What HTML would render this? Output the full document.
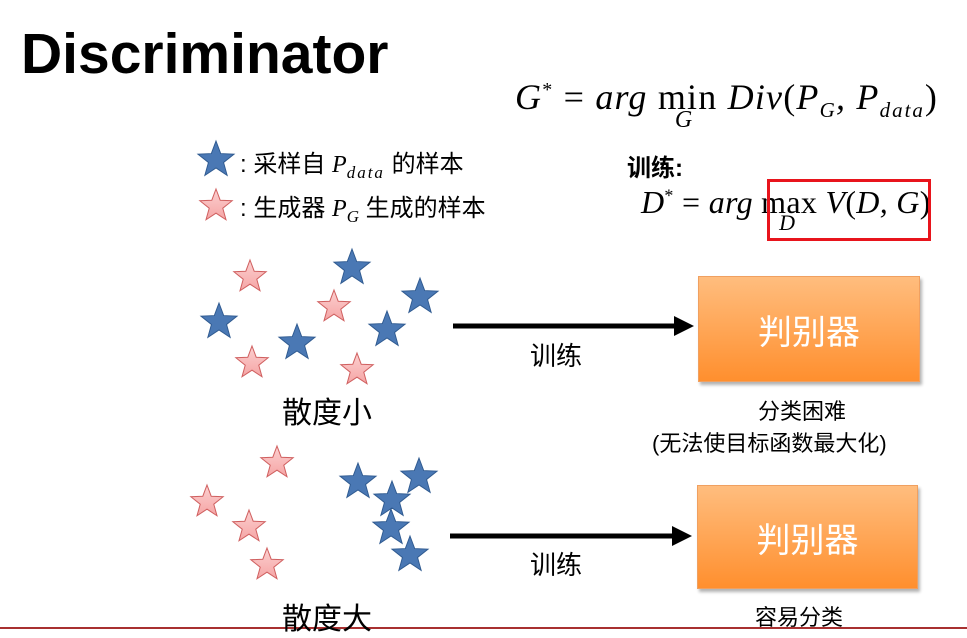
<!DOCTYPE html>
<html><head><meta charset="utf-8"><style>
body{margin:0;width:967px;height:630px;background:#fff;position:relative;overflow:hidden;font-family:"Liberation Sans","Noto Sans CJK SC",sans-serif;color:#000}
.a{position:absolute;white-space:nowrap}
.m{font-family:"Liberation Serif","DejaVu Serif",serif;font-style:italic}
.box{position:absolute;background:linear-gradient(#ffbd7e,#ff8f2e);border:1px solid #f0a060;box-shadow:2px 3px 3px rgba(0,0,0,.3);color:#fff;font-size:34px;display:flex;align-items:center;justify-content:center}
</style></head><body>
<div class="a" style="left:21px;top:21px;font-size:57px;font-weight:bold;letter-spacing:0">Discriminator</div>

<div class="a m" style="left:515px;top:76px;font-size:36px;letter-spacing:1.2px">G<sup style="font-size:20px;font-style:normal">*</sup> <span style="font-style:normal">=</span> arg <span style="font-style:normal;position:relative">min<span style="position:absolute;left:17px;top:30px;font-size:24px;font-style:italic">G</span></span> Div<span style="font-style:normal">(</span>P<sub style="font-size:21px">G</sub>, P<sub style="font-size:21px;letter-spacing:2px">data</sub><span style="font-style:normal">)</span></div>

<div class="a" style="left:627px;top:148px;font-size:24px;font-weight:bold">训练:</div>
<div class="a m" style="left:641px;top:184px;font-size:32px;letter-spacing:0.3px">D<sup style="font-size:18px;font-style:normal">*</sup> <span style="font-style:normal">=</span> arg <span style="font-style:normal;position:relative">max<span style="position:absolute;left:18px;top:26px;font-size:22px;font-style:italic">D</span></span> V<span style="font-style:normal">(</span>D, G<span style="font-style:normal">)</span></div>
<div class="a" style="left:767px;top:179px;width:164px;height:62px;border:3px solid #e8141c;box-sizing:border-box"></div>

<div class="a" style="left:240px;top:144px;font-size:24px">: 采样自 <span class="m">P<sub style="font-size:17px;letter-spacing:2px">data</sub></span> 的样本</div>
<div class="a" style="left:240px;top:188px;font-size:24px">: 生成器 <span class="m">P<sub style="font-size:17px">G</sub></span> 生成的样本</div>

<svg class="a" style="left:0;top:0" width="967" height="630">
<defs>
<polygon id="s" points="0,-1 0.247,-0.34 0.951,-0.309 0.399,0.13 0.588,0.809 0,0.42 -0.588,0.809 -0.399,0.13 -0.951,-0.309 -0.247,-0.34"/>
<linearGradient id="pg" x1="0" y1="0" x2="0" y2="1"><stop offset="0" stop-color="#fcd0d0"/><stop offset="1" stop-color="#f5a5a5"/></linearGradient>
</defs>
<g fill="#4a78b4" stroke="#2f5a90" stroke-width="0.05">
<use href="#s" transform="translate(216,160) scale(19)"/>
<use href="#s" transform="translate(352,268) scale(19)"/>
<use href="#s" transform="translate(420,297) scale(19)"/>
<use href="#s" transform="translate(219,322) scale(19)"/>
<use href="#s" transform="translate(297,343) scale(19)"/>
<use href="#s" transform="translate(387,330) scale(19)"/>
<use href="#s" transform="translate(358,482) scale(19)"/>
<use href="#s" transform="translate(419,477) scale(19)"/>
<use href="#s" transform="translate(392,500) scale(19)"/>
<use href="#s" transform="translate(391,528) scale(19)"/>
<use href="#s" transform="translate(410,555) scale(19)"/>
</g>
<g fill="url(#pg)" stroke="#d06060" stroke-width="0.06">
<use href="#s" transform="translate(216,206) scale(17)"/>
<use href="#s" transform="translate(250,277) scale(17)"/>
<use href="#s" transform="translate(334,307) scale(17)"/>
<use href="#s" transform="translate(252,363) scale(17)"/>
<use href="#s" transform="translate(357,370) scale(17)"/>
<use href="#s" transform="translate(277,463) scale(17)"/>
<use href="#s" transform="translate(207,502) scale(17)"/>
<use href="#s" transform="translate(249,527) scale(17)"/>
<use href="#s" transform="translate(267,565) scale(17)"/>
</g>
<line x1="453" y1="326" x2="676" y2="326" stroke="#000" stroke-width="5"/>
<polygon points="674,316 694,326 674,336" fill="#000"/>
<line x1="450" y1="536" x2="674" y2="536" stroke="#000" stroke-width="5"/>
<polygon points="672,526 692,536 672,546" fill="#000"/>
<line x1="0" y1="628" x2="967" y2="628" stroke="#a83030" stroke-width="2"/>
</svg>

<div class="a" style="left:530px;top:336px;font-size:26px">训练</div>
<div class="a" style="left:530px;top:545px;font-size:26px">训练</div>
<div class="a" style="left:282px;top:388px;font-size:30px">散度小</div>
<div class="a" style="left:282px;top:594px;font-size:30px">散度大</div>

<div class="box" style="left:698px;top:276px;width:220px;height:104px">判别器</div>
<div class="box" style="left:697px;top:485px;width:219px;height:102px">判别器</div>

<div class="a" style="left:758px;top:394px;font-size:22px">分类困难</div>
<div class="a" style="left:652px;top:426px;font-size:22px">(无法使目标函数最大化)</div>
<div class="a" style="left:755px;top:600px;font-size:22px">容易分类</div>
</body></html>
